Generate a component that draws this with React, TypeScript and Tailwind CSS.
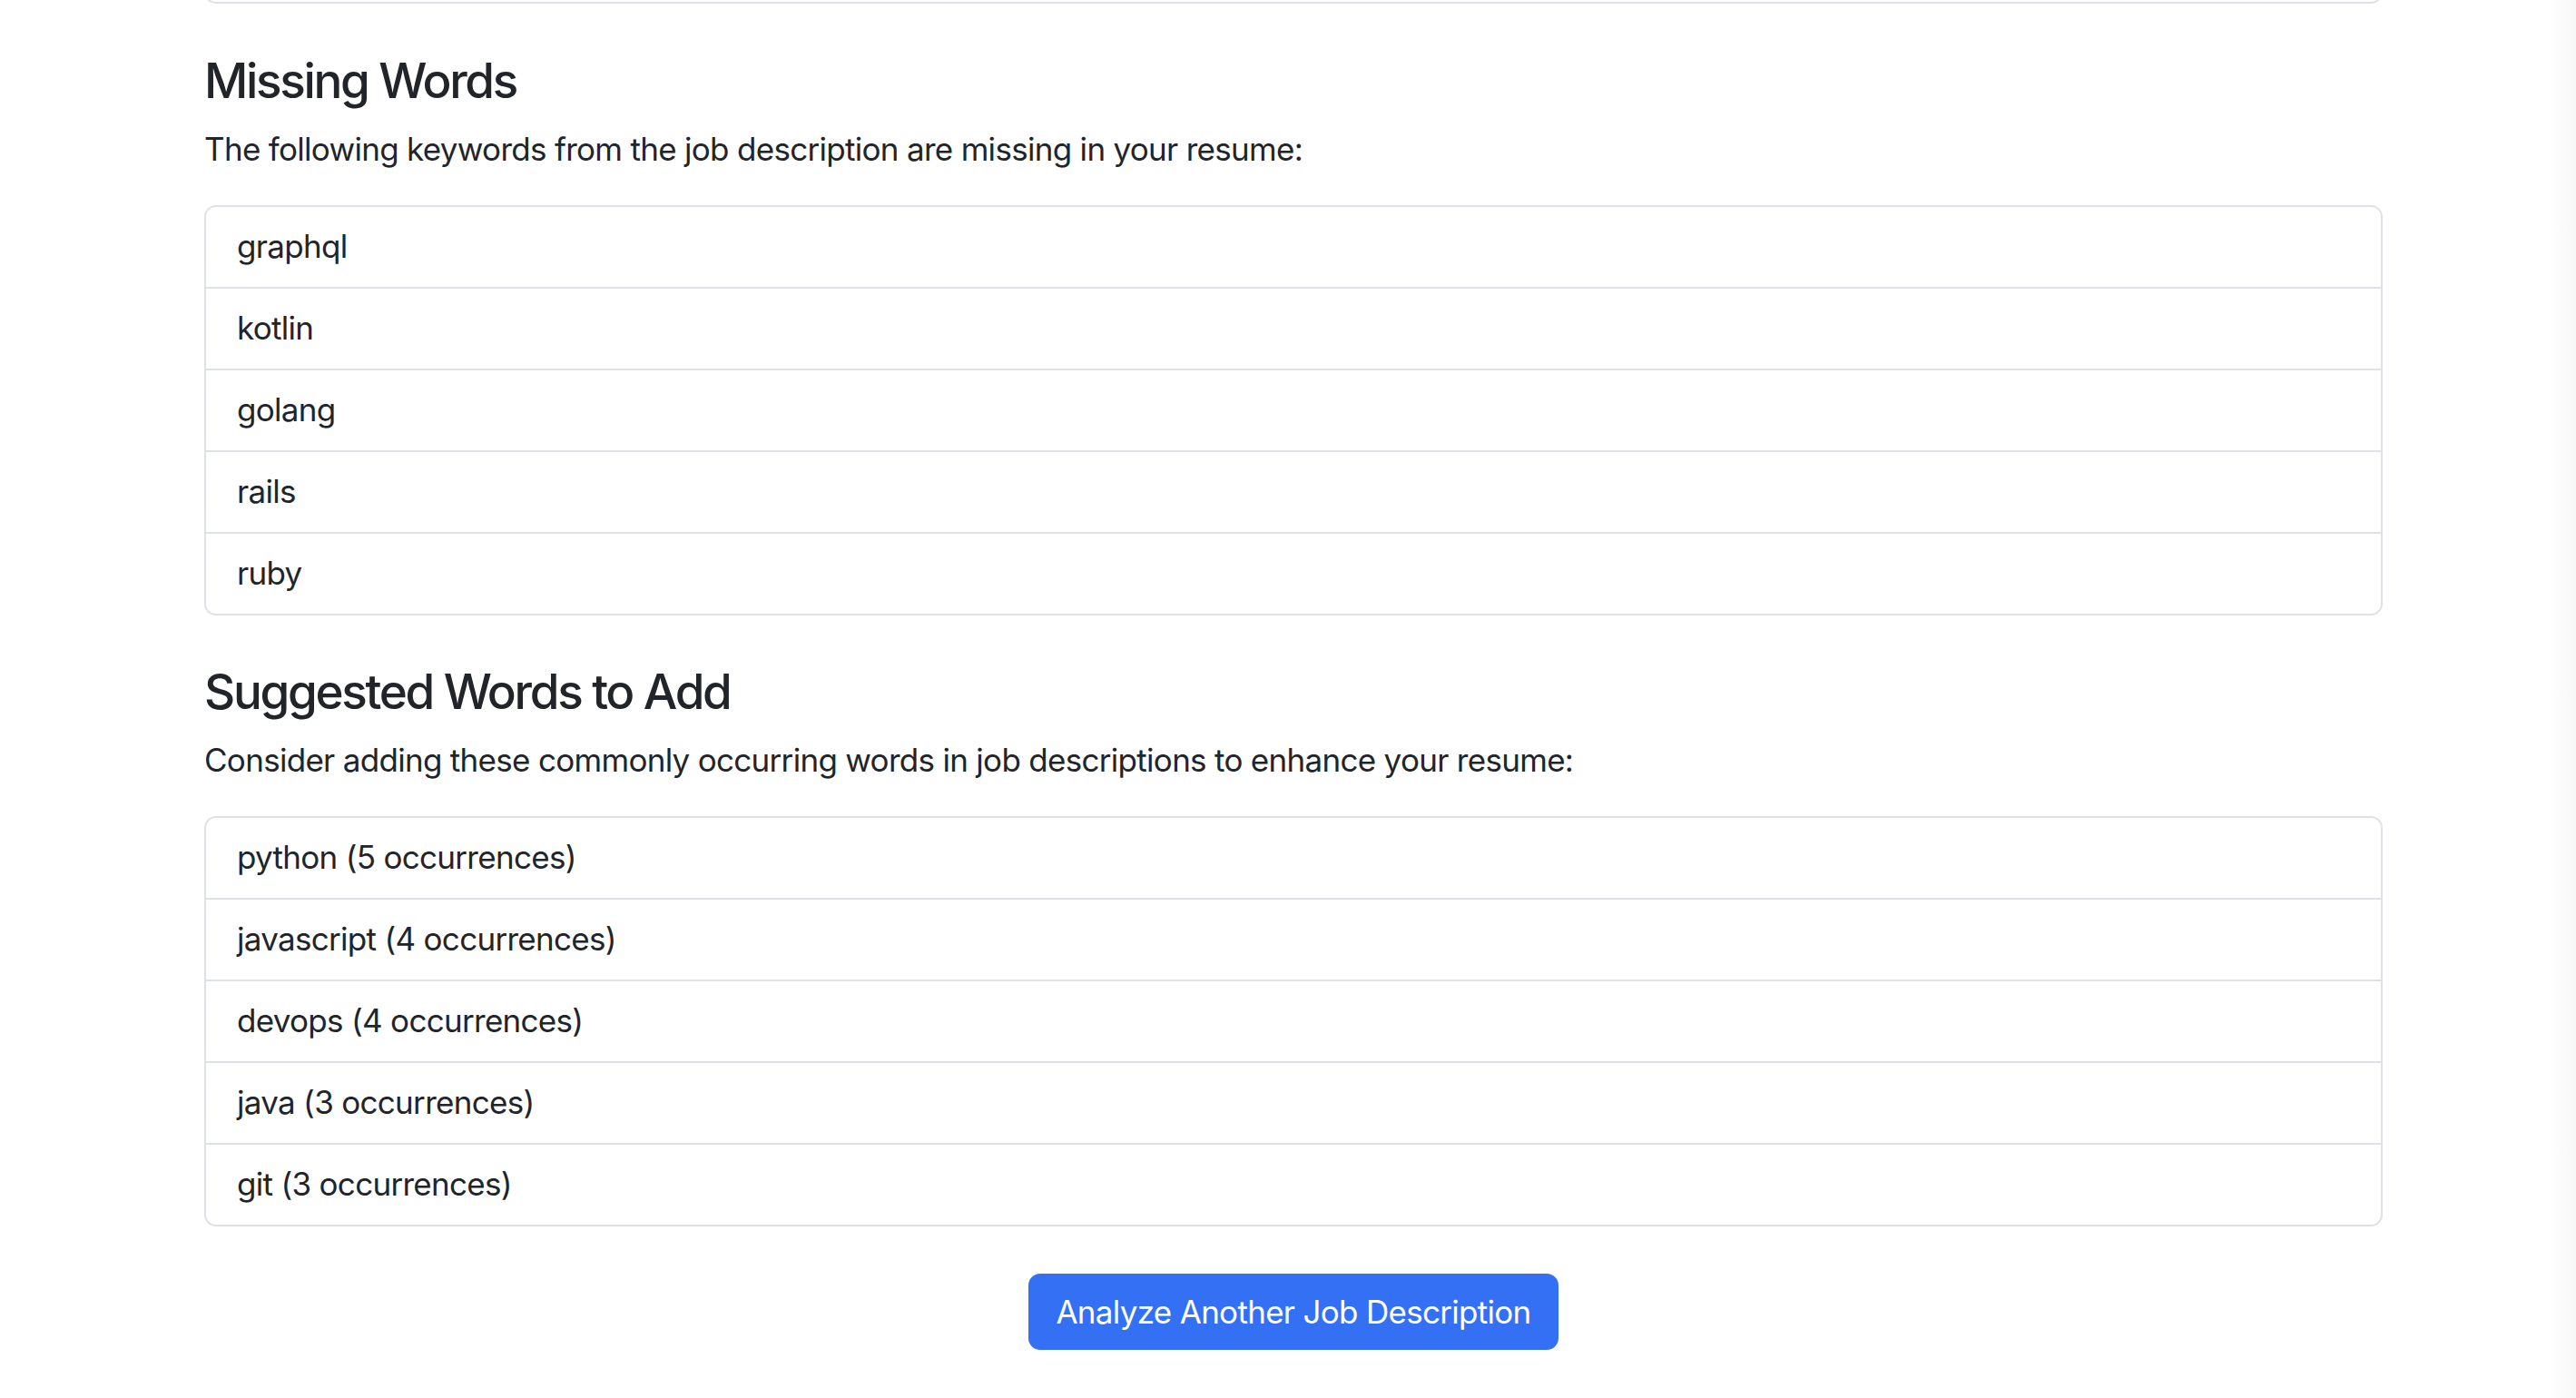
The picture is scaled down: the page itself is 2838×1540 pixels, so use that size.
import React from "react";

const missing = ["graphql", "kotlin", "golang", "rails", "ruby"];
const suggested = [
  "python (5 occurrences)",
  "javascript (4 occurrences)",
  "devops (4 occurrences)",
  "java (3 occurrences)",
  "git (3 occurrences)",
];

function ListGroup({ items }: { items: string[] }) {
  return (
    <ul className="border-2 border-[#dee2e6] rounded-[13px] overflow-hidden">
      {items.map((t, i) => (
        <li
          key={t}
          className={
            "pl-[34px] pt-[17px] pb-[18px] text-[35px] leading-[53px] tracking-[-0.02em] text-[#212529] " +
            (i < items.length - 1 ? "border-b-2 border-[#dee2e6]" : "")
          }
        >
          {t}
        </li>
      ))}
    </ul>
  );
}

export default function App() {
  return (
    <div
      className="flex min-h-[1540px] w-full bg-white overflow-hidden"
      style={{ fontFamily: "Inter, 'Noto Sans', 'Liberation Sans', sans-serif" }}
    >
      <main className="flex-1 pl-[225px]">
        <div className="w-[2400px]">
          <div className="-mt-[40px] h-[44px] border-2 border-[#dee2e6] rounded-[13px]" />

          <h4 className="mt-[53px] text-[53px] leading-[64px] font-medium tracking-[-0.044em] text-[#212529]">
            Missing Words
          </h4>
          <p className="mt-[17px] text-[35px] leading-[53px] tracking-[-0.02em] text-[#212529]">
            The following keywords from the job description are missing in your resume:
          </p>
          <div className="mt-[35px]">
            <ListGroup items={missing} />
          </div>

          <h4 className="mt-[52px] text-[53px] leading-[64px] font-medium tracking-[-0.044em] text-[#212529]">
            Suggested Words to Add
          </h4>
          <p className="mt-[17px] text-[35px] leading-[53px] tracking-[-0.02em] text-[#212529]">
            Consider adding these commonly occurring words in job descriptions to enhance your resume:
          </p>
          <div className="mt-[35px]">
            <ListGroup items={suggested} />
          </div>

          <div className="mt-[52px] flex justify-center">
            <button className="h-[84px] px-[30px] rounded-[13px] bg-[#3470f4] text-white text-[35px] leading-[53px] tracking-[-0.02em]">
              Analyze Another Job Description
            </button>
          </div>
        </div>
      </main>
      <div className="w-[28px] shrink-0 bg-gradient-to-r from-white to-[#f6f6f6]" />
    </div>
  );
}
